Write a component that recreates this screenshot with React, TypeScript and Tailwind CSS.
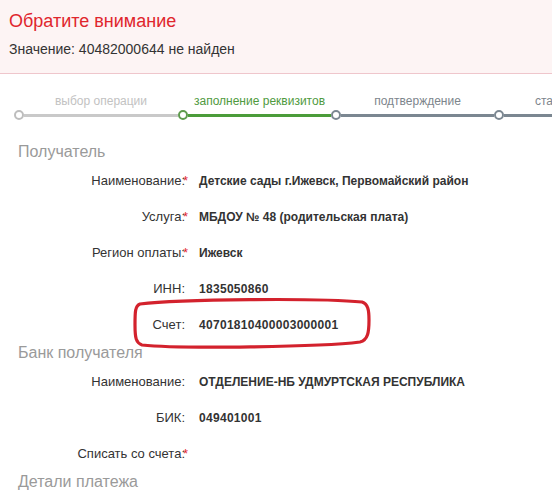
import React from "react";

type Field = { label: string; value?: string; required?: boolean };

const recipient: Field[] = [
  { label: "Наименование:", value: "Детские сады г.Ижевск, Первомайский район", required: true },
  { label: "Услуга:", value: "МБДОУ № 48 (родительская плата)", required: true },
  { label: "Регион оплаты:", value: "Ижевск", required: true },
  { label: "ИНН:", value: "1835050860" },
  { label: "Счет:", value: "40701810400003000001" },
];

const bank: Field[] = [
  { label: "Наименование:", value: "ОТДЕЛЕНИЕ-НБ УДМУРТСКАЯ РЕСПУБЛИКА" },
  { label: "БИК:", value: "049401001" },
  { label: "Списать со счета:", required: true },
];

function Row({ f }: { f: Field }) {
  const digits = f.value && /^\d+$/.test(f.value);
  return (
    <div className="grid grid-cols-[189px_1fr] items-center h-[36px]">
      <div className="text-right text-[13px] text-[#333] pr-[4px]">
        <span className="relative">
          {f.label}
          {f.required && <span className="absolute -right-[3px] -top-[2px] text-[#e3262e]">*</span>}
        </span>
      </div>
      <div className={`pl-[10px] text-[12px] font-bold text-[#333] ${digits ? "tracking-[0.3px]" : ""}`}>{f.value}</div>
    </div>
  );
}

function Section({ title }: { title: string }) {
  return <div className="h-[21px] pl-[18px] text-[16px] leading-[20px] text-[#9a9a9a]">{title}</div>;
}

const steps = [
  { label: "выбор операции", w: "w-[164px]", text: "text-[#c2c2c2]", line: "bg-[#c9c9c9]", dot: "border-[#bdbdbd]" },
  { label: "заполнение реквизитов", w: "w-[153px]", text: "text-[#4f9a3e]", line: "bg-[#4b9c3a]", dot: "border-[#5e9b4d]" },
  { label: "подтверждение", w: "w-[163px]", text: "text-[#7d858c]", line: "bg-[#7b8791]", dot: "border-[#7b8791]" },
  { label: "статус операции", w: "w-[164px]", text: "text-[#7d858c]", line: "bg-[#7b8791]", dot: "border-[#7b8791]" },
];

export default function App() {
  return (
    <div className="w-[552px] h-[490px] overflow-hidden bg-white font-['Liberation_Sans',Arial,sans-serif] relative">
      <div className="h-[74px] bg-[#fdf4f4] border-b border-[#efc6cc] px-[9px] pt-[9px]">
        <div className="text-[18px] leading-[24px] text-[#e0262d]">Обратите внимание</div>
        <div className="mt-[7px] text-[14px] leading-[18px] text-[#333]">Значение: 40482000644 не найден</div>
      </div>

      <div className="flex pl-[14px] pt-[19px] h-[68px] whitespace-nowrap">
        {steps.map((s) => (
          <div key={s.label} className={`${s.w} shrink-0 flex flex-col`}>
            <div className={`pl-[10px] text-center text-[12px] leading-[16px] ${s.text}`}>{s.label}</div>
            <div className="flex items-center mt-[1px]">
              <div className={`w-[10px] h-[10px] rounded-full border-2 bg-white shrink-0 ${s.dot}`} />
              <div className={`flex-1 h-[3px] ${s.line}`} />
            </div>
          </div>
        ))}
      </div>

      <Section title="Получатель" />
      {recipient.map((f) => (
        <Row key={f.label} f={f} />
      ))}
      <Section title="Банк получателя" />
      {bank.map((f) => (
        <Row key={f.label} f={f} />
      ))}
      <Section title="Детали платежа" />

      <svg className="absolute left-0 top-0 pointer-events-none" width="552" height="490">
        <path
          d="M140 304 C180 299 320 298 362 302 C368 304 369 310 369 320 C369 332 368 340 360 342 C320 347 180 349 142 345 C136 343 135 338 135 325 C135 312 135 306 140 304 Z"
          fill="none"
          stroke="#d3222d"
          strokeWidth="3.2"
        />
      </svg>
    </div>
  );
}
